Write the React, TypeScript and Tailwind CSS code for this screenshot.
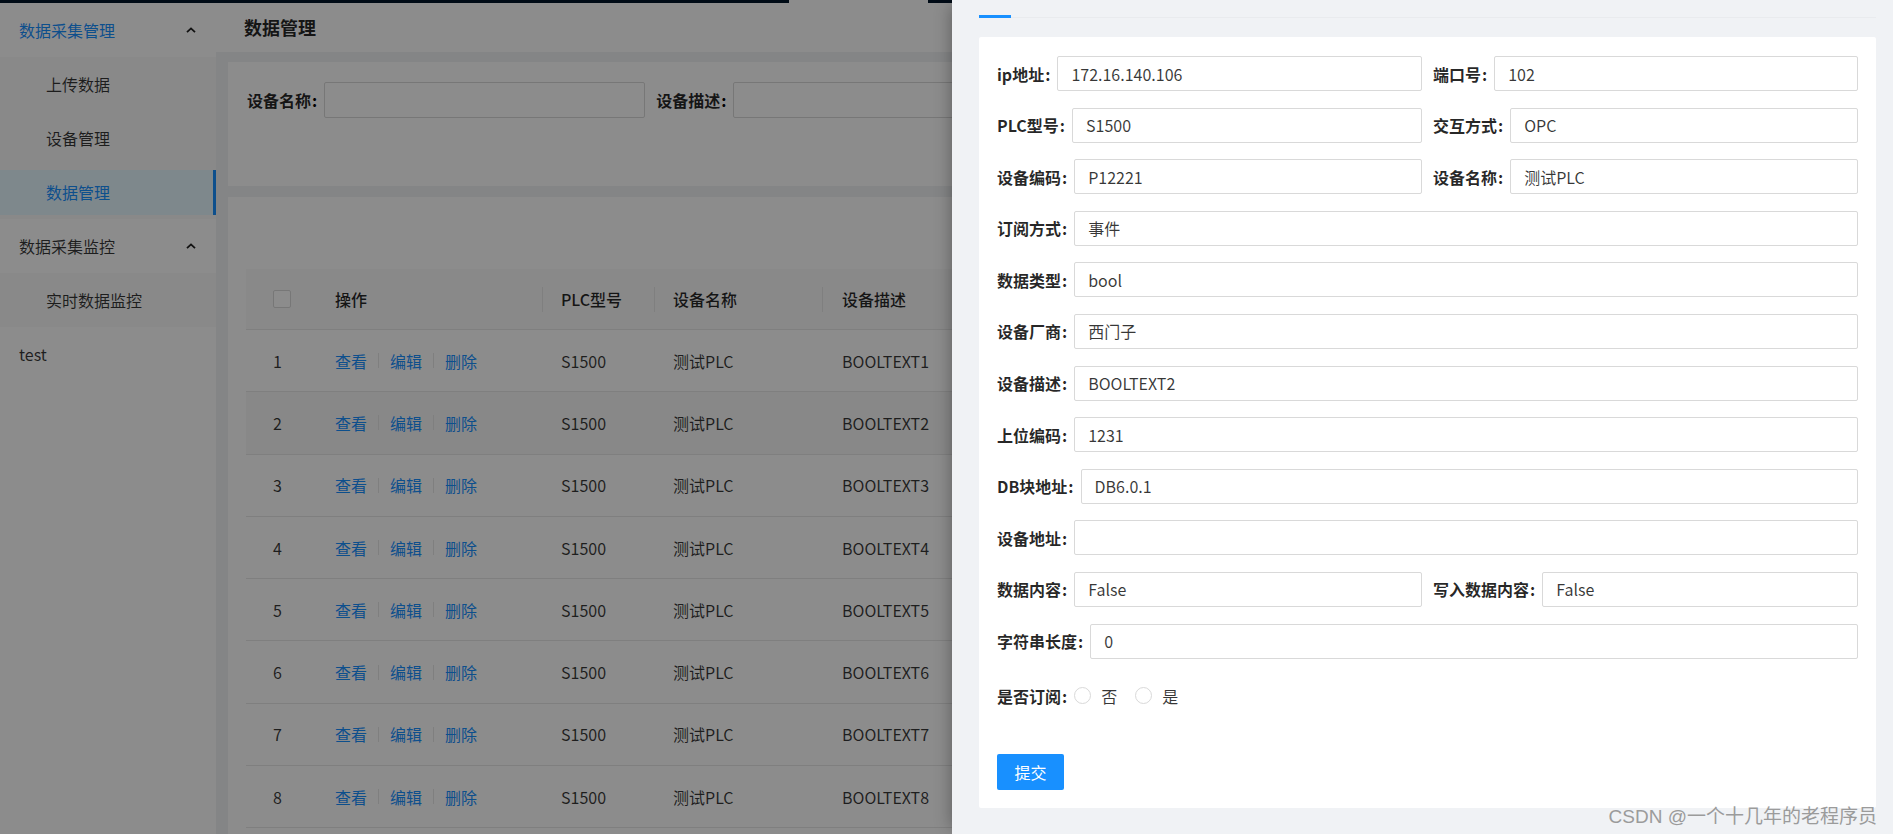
import React from 'react';

type Field = { label: string; value: string };

const rows = [1, 2, 3, 4, 5, 6, 7, 8];

function Caret() {
  return (
    <svg width="10" height="6" viewBox="0 0 10 6" className="text-[#1f1f1f]">
      <path d="M1 5.2 L5 1.4 L9 5.2" fill="none" stroke="currentColor" strokeWidth="1.8" />
    </svg>
  );
}

function MenuRow({
  children,
  sub,
  selected,
  open,
  active,
}: {
  children: React.ReactNode;
  sub?: boolean;
  selected?: boolean;
  open?: boolean;
  active?: boolean;
}) {
  return (
    <div className="py-[4.5px]">
      <div
        className={
          'flex h-[45px] items-center justify-between text-[16px] ' +
          (sub ? 'pl-[46px] ' : 'pl-[19px] ') +
          (selected
            ? 'bg-[#e6f7ff] border-r-[3px] border-[#1890ff] text-[#1890ff]'
            : active
              ? 'text-[#1890ff]'
              : 'text-[rgba(0,0,0,0.78)]')
        }
      >
        <span>{children}</span>
        {open && (
          <span className="mr-[20px] flex items-center">
            <Caret />
          </span>
        )}
      </div>
    </div>
  );
}

function Sidebar() {
  return (
    <aside className="flex w-[216px] shrink-0 flex-col bg-white">
      <MenuRow open active>
        数据采集管理
      </MenuRow>
      <div className="flex flex-col bg-[#fafafa]">
        <MenuRow sub>上传数据</MenuRow>
        <MenuRow sub>设备管理</MenuRow>
        <MenuRow sub selected>
          数据管理
        </MenuRow>
      </div>
      <MenuRow open>数据采集监控</MenuRow>
      <div className="flex flex-col bg-[#fafafa]">
        <MenuRow sub>实时数据监控</MenuRow>
      </div>
      <MenuRow>test</MenuRow>
    </aside>
  );
}

function DataTable() {
  const th = 'relative flex h-full items-center';
  return (
    <div className="w-[776px] text-[16px]">
      <div className="flex h-[61px] items-center border-b border-[#e8e8e8] bg-[#fafafa] font-medium text-[rgba(0,0,0,0.85)]">
        <div className={th + ' w-[70px] pl-[27px]'}>
          <span className="h-[18px] w-[18px] rounded-[2px] border border-[#d9d9d9] bg-white" />
        </div>
        <div className={th + ' w-[226px] pl-[19px]'}>操作</div>
        <div className={th + ' w-[112px] pl-[19px]'}>
          <span className="mr-[18px] h-[25px] w-px bg-[#e8e8e8] -ml-[19px]" />
          PLC型号
        </div>
        <div className={th + ' w-[168px] pl-[19px]'}>
          <span className="mr-[18px] h-[25px] w-px bg-[#e8e8e8] -ml-[19px]" />
          设备名称
        </div>
        <div className={th + ' w-[200px] pl-[20px]'}>
          <span className="mr-[19px] h-[25px] w-px bg-[#e8e8e8] -ml-[20px]" />
          设备描述
        </div>
      </div>
      {rows.map((n) => (
        <div
          key={n}
          className={
            'flex h-[62.3px] items-center border-b border-[#e8e8e8] text-[rgba(0,0,0,0.78)] ' +
            (n === 2 ? 'bg-[#f8f8f8]' : 'bg-white')
          }
        >
          <div className="w-[70px] pl-[27px]">{n}</div>
          <div className="flex w-[226px] items-center pl-[19px] text-[#1890ff]">
            <span>查看</span>
            <span className="mx-[11px] h-[15px] w-px bg-[#e8e8e8]" />
            <span>编辑</span>
            <span className="mx-[11px] h-[15px] w-px bg-[#e8e8e8]" />
            <span>删除</span>
          </div>
          <div className="w-[112px] pl-[19px]">S1500</div>
          <div className="w-[168px] pl-[19px]">测试PLC</div>
          <div className="w-[200px] pl-[20px]">BOOLTEXT{n}</div>
        </div>
      ))}
    </div>
  );
}

function Page() {
  return (
    <div className="flex h-[831px]">
      <Sidebar />
      <main className="min-w-0 flex-1 bg-[#f0f2f5]">
        <div className="flex h-[49px] items-center bg-white pl-[28px] text-[18px] font-bold text-[rgba(0,0,0,0.85)]">
          数据管理
        </div>
        <div className="flex flex-col gap-[11px] pl-[12px] pt-[10px]">
          <div className="flex h-[124px] items-start gap-[11px] bg-white pl-[19px] pt-[20px] text-[16px]">
            <div className="flex items-center">
              <span className="font-bold text-[rgba(0,0,0,0.85)]">设备名称</span>
              <span className="ml-[1px] mr-[7px] font-bold">:</span>
              <div className="h-[36px] w-[321px] rounded-[2px] border border-[#d9d9d9] bg-white" />
            </div>
            <div className="flex items-center">
              <span className="font-bold text-[rgba(0,0,0,0.85)]">设备描述</span>
              <span className="ml-[1px] mr-[7px] font-bold">:</span>
              <div className="h-[36px] w-[321px] rounded-[2px] border border-[#d9d9d9] bg-white" />
            </div>
          </div>
          <div className="h-[700px] overflow-hidden bg-white pl-[18px] pt-[72px]">
            <DataTable />
          </div>
        </div>
      </main>
    </div>
  );
}

function Label({ text }: { text: string }) {
  return (
    <span className="flex shrink-0 items-center whitespace-nowrap text-[16px] font-bold text-[rgba(0,0,0,0.85)]">
      {text}
      <span className="ml-[1px] mr-[7px]">:</span>
    </span>
  );
}

function Input({ value }: { value: string }) {
  return (
    <input
      readOnly
      value={value}
      className="h-[35px] min-w-0 flex-1 rounded-[2px] border border-[#d9d9d9] bg-white pl-[13px] text-[16px] text-[rgba(0,0,0,0.78)] outline-none"
    />
  );
}

function FieldRow({ f }: { f: Field }) {
  return (
    <div className="flex items-center">
      <Label text={f.label} />
      <Input value={f.value} />
    </div>
  );
}

function Pair({ a, b }: { a: Field; b: Field }) {
  return (
    <div className="grid grid-cols-2 gap-x-[11px]">
      <FieldRow f={a} />
      <FieldRow f={b} />
    </div>
  );
}

function Radio({ label }: { label: string }) {
  return (
    <span className="mr-[18px] flex items-center">
      <span className="h-[17px] w-[17px] rounded-full border border-[#d9d9d9] bg-white" />
      <span className="ml-[10px] text-[16px] text-[rgba(0,0,0,0.78)]">{label}</span>
    </span>
  );
}

function Drawer() {
  const single: Field[] = [
    { label: '订阅方式', value: '事件' },
    { label: '数据类型', value: 'bool' },
    { label: '设备厂商', value: '西门子' },
    { label: '设备描述', value: 'BOOLTEXT2' },
    { label: '上位编码', value: '1231' },
    { label: 'DB块地址', value: 'DB6.0.1' },
    { label: '设备地址', value: '' },
  ];
  return (
    <div className="absolute right-0 top-0 flex h-full w-[941px] flex-col bg-[#f0f2f5] pl-[27px] pr-[17px] shadow-[-6px_0_16px_-6px_rgba(0,0,0,0.35)]">
      <div className="relative h-[18px] border-b border-[#e9ebee]">
        <span className="absolute -bottom-[1px] left-0 h-[3px] w-[32px] bg-[#1890ff]" />
      </div>
      <div className="mt-[19px] flex flex-col gap-[16.6px] rounded-[2px] bg-white px-[18px] pb-[18px] pt-[19px]">
        <Pair a={{ label: 'ip地址', value: '172.16.140.106' }} b={{ label: '端口号', value: '102' }} />
        <Pair a={{ label: 'PLC型号', value: 'S1500' }} b={{ label: '交互方式', value: 'OPC' }} />
        <Pair a={{ label: '设备编码', value: 'P12221' }} b={{ label: '设备名称', value: '测试PLC' }} />
        {single.map((f) => (
          <FieldRow key={f.label} f={f} />
        ))}
        <Pair a={{ label: '数据内容', value: 'False' }} b={{ label: '写入数据内容', value: 'False' }} />
        <FieldRow f={{ label: '字符串长度', value: '0' }} />
        <div className="mt-[3px] flex h-[35px] items-center">
          <Label text="是否订阅" />
          <Radio label="否" />
          <Radio label="是" />
        </div>
        <div className="mt-[24px]">
          <button className="h-[36px] w-[67px] rounded-[2px] bg-[#1890ff] text-[16px] text-white">
            提交
          </button>
        </div>
      </div>
      <span className="absolute bottom-[8px] right-[16px] font-['Liberation_Sans','Noto_Sans_CJK_SC',sans-serif] text-[19px] leading-none text-[#9b9b9b]">
        CSDN @一个十几年的老程序员
      </span>
    </div>
  );
}

export default function App() {
  return (
    <div className="relative h-[834px] w-[1893px] overflow-hidden bg-white font-['Noto_Sans_CJK_SC',sans-serif]">
      <div className="flex h-[3px]">
        <div className="w-[789px] bg-[#001529]" />
        <div className="w-[139px] bg-white" />
        <div className="flex-1 bg-[#001529]" />
      </div>
      <Page />
      <div className="absolute inset-0 bg-black/45" />
      <Drawer />
    </div>
  );
}
